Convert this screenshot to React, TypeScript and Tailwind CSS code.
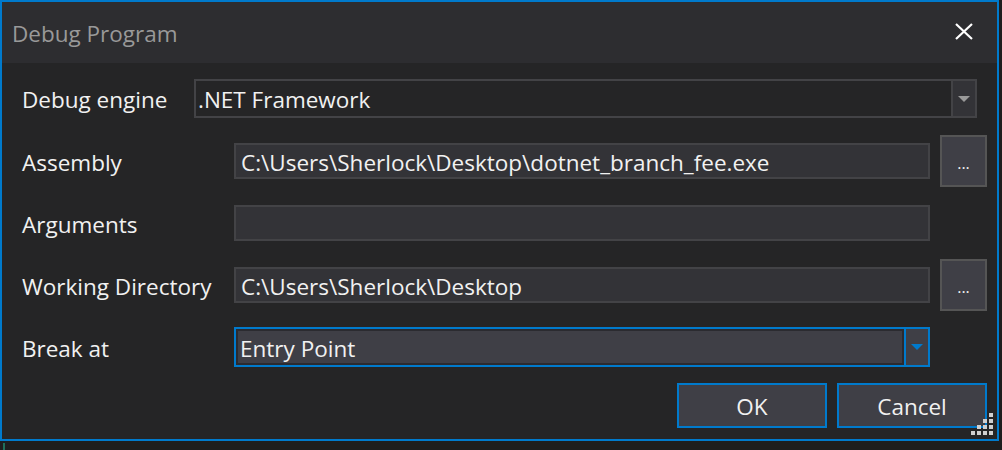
import React from 'react';

function BrowseButton() {
  return (
    <button className="w-[47px] h-[52px] bg-[#3f3f46] border-2 border-[#555555] text-[#f1f1f1] text-[16px] leading-none flex items-end justify-center pb-[14px]">
      ...
    </button>
  );
}

function TextBox({ value }: { value?: string }) {
  return (
    <div className="w-[696px] h-[36px] bg-[#333337] border-2 border-[#434346] flex items-center pl-[5px] pt-[3px] text-[#f1f1f1] whitespace-nowrap">
      {value}
    </div>
  );
}

function ResizeGrip() {
  const dots = [
    [18, 0],
    [12, 6], [18, 6],
    [6, 12], [12, 12], [18, 12],
    [0, 18], [6, 18], [12, 18], [18, 18],
  ];
  return (
    <svg className="absolute right-[4px] bottom-[4px]" width="22" height="22" viewBox="0 0 22 22">
      {dots.map(([x, y], i) => (
        <rect key={i} x={x} y={y} width="4" height="4" fill="#d0d0d0" />
      ))}
    </svg>
  );
}

export default function App() {
  return (
    <div className="w-[1002px] h-[450px] bg-[#1e1e1e] relative font-['Open_Sans',sans-serif] text-[22.5px] leading-[1.3]">
      <div className="w-[999px] h-[441px] border-2 border-[#007acc] bg-[#252526] flex flex-col relative">
        {/* Title bar */}
        <div className="h-[61px] bg-[#2d2d30] flex items-center justify-between pl-[10px] pr-[24px]">
          <span className="text-[#999999] pt-[3px]">Debug Program</span>
          <svg width="18" height="17" viewBox="0 0 18 17" className="mt-[-3px]">
            <path d="M1 1 L17 16 M17 1 L1 16" stroke="#ffffff" strokeWidth="2.2" />
          </svg>
        </div>

        <div className="flex flex-col pl-[20px] pr-[10px] text-[#f1f1f1]">
          {/* Debug engine */}
          <div className="flex items-center mt-[16px] h-[39px]">
            <span className="w-[172px] pt-[3px] whitespace-nowrap">Debug engine</span>
            <div className="w-[783px] h-[39px] border-2 border-[#434346] flex">
              <div className="flex-1 flex items-center pl-[2px] pt-[3px] whitespace-nowrap">.NET Framework</div>
              <div className="w-[24px] bg-[#333337] border-l-2 border-[#434346] flex items-center justify-center">
                <svg width="12" height="6" viewBox="0 0 12 6">
                  <path d="M0 0 H12 L6 6 Z" fill="#999999" />
                </svg>
              </div>
            </div>
          </div>

          {/* Assembly */}
          <div className="flex items-center h-[52px] mt-[17px]">
            <span className="w-[212px] pt-[3px]">Assembly</span>
            <TextBox value="C:\Users\Sherlock\Desktop\dotnet_branch_fee.exe" />
            <div className="ml-[10px]"><BrowseButton /></div>
          </div>

          {/* Arguments */}
          <div className="flex items-center h-[52px] mt-[10px]">
            <span className="w-[212px] pt-[3px]">Arguments</span>
            <TextBox />
          </div>

          {/* Working Directory */}
          <div className="flex items-center h-[52px] mt-[10px]">
            <span className="w-[212px] pt-[3px] whitespace-nowrap">Working Directory</span>
            <TextBox value="C:\Users\Sherlock\Desktop" />
            <div className="ml-[10px]"><BrowseButton /></div>
          </div>

          {/* Break at */}
          <div className="flex items-center h-[52px] mt-[10px]">
            <span className="w-[212px] pt-[3px]">Break at</span>
            <div className="w-[696px] h-[40px] border-2 border-[#007acc] flex bg-[#3f3f46]">
              <div className="flex-1 flex items-center pl-[2px] pt-[3px] border-2 border-[#2b2b30] whitespace-nowrap">Entry Point</div>
              <div className="w-[24px] border-l-2 border-[#007acc] flex items-center justify-center">
                <svg width="12" height="6" viewBox="0 0 12 6">
                  <path d="M0 0 H12 L6 6 Z" fill="#007acc" />
                </svg>
              </div>
            </div>
          </div>

          {/* Buttons */}
          <div className="flex justify-end gap-[10px] mt-[10px]">
            <button className="w-[150px] h-[45px] bg-[#3f3f46] border-2 border-[#007acc] text-[#f1f1f1] pt-[2px]">OK</button>
            <button className="w-[150px] h-[45px] bg-[#3f3f46] border-2 border-[#007acc] text-[#f1f1f1] pt-[2px]">Cancel</button>
          </div>
        </div>
        <ResizeGrip />
      </div>
      <div className="absolute left-[3px] top-[443px] w-[2px] h-[7px] bg-[#1f6f5a]" />
    </div>
  );
}
